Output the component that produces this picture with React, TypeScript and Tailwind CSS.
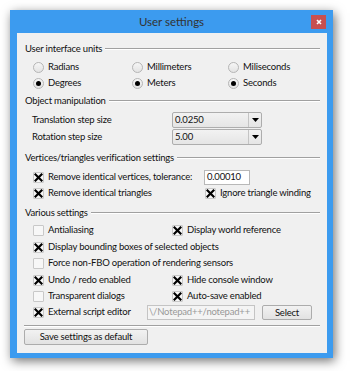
import React from "react";

const font = { fontFamily: 'Lato, "Noto Sans", sans-serif' };

function Radio({ checked, label }: { checked?: boolean; label: string }) {
  return (
    <div className="flex h-4 items-center">
      <span className="flex h-[11px] w-[11px] items-center justify-center rounded-full border border-[#b5b5b5] bg-gradient-to-b from-[#f6f6f6] to-[#e3e3e3]">
        {checked ? <span className="h-[5px] w-[5px] rounded-full bg-black" /> : null}
      </span>
      <span className="ml-[4px]">{label}</span>
    </div>
  );
}

function Check({ checked, label }: { checked?: boolean; label: string }) {
  return (
    <div className="flex h-4 items-center whitespace-nowrap">
      <span className="flex h-[11px] w-[11px] items-center justify-center rounded-[1px] border border-[#c8c8c8] bg-[#f7f7f7]">
        {checked ? (
          <svg width="9" height="9" viewBox="0 0 9 9">
            <path d="M1.5 1.5 L7.5 7.5 M7.5 1.5 L1.5 7.5" stroke="#000" strokeWidth="2.2" strokeLinecap="square" />
          </svg>
        ) : null}
      </span>
      <span className="ml-[4px]">{label}</span>
    </div>
  );
}

function Header({ label }: { label: string }) {
  return (
    <div className="flex h-[14px] items-center pl-2 pr-[7px]">
      <span className="whitespace-nowrap">{label}</span>
      <span className="ml-[3px] h-[2px] flex-1 border-t border-b border-t-[#a0a0a0] border-b-white" />
    </div>
  );
}

function Combo({ value }: { value: string }) {
  return (
    <div className="flex h-4 w-[90px] items-center rounded-[2px] border border-[#adadad] bg-gradient-to-b from-[#f2f2f2] to-[#e5e5e5]">
      <span className="flex-1 pl-[2px]">{value}</span>
      <span className="flex h-full w-[13px] items-center justify-center border-l border-[#c4c4c4]">
        <svg width="7" height="4" viewBox="0 0 7 4">
          <path d="M0 0 H7 L3.5 4 Z" fill="#000" />
        </svg>
      </span>
    </div>
  );
}

export default function App() {
  return (
    <div className="h-[371px] w-[350px] bg-white pl-[10px] pt-[10px]" style={font}>
      <div className="flex h-[348px] w-[323px] flex-col bg-[#3c9bef] shadow-[2px_3px_10px_rgba(0,0,0,0.55)]">
        <div className="relative flex h-[23px] items-center justify-center text-[11.5px] text-[#333]">
          User settings
          <span className="absolute right-[7px] top-[5px] flex h-[14px] w-[15px] items-center justify-center bg-[#c75050]">
            <svg width="6" height="6" viewBox="0 0 6 6">
              <path d="M1 1 L5 5 M5 1 L1 5" stroke="#fff" strokeWidth="1.6" />
            </svg>
          </span>
        </div>
        <div className="ml-[7px] mr-[6px] h-[320px] bg-[#f0f0f0] text-[9.5px] tracking-[-0.2px] text-[#111]">
          <div className="pt-[9px]">
            <Header label="User interface units" />
          </div>
          <div className="mt-[3px] grid grid-cols-[99px_96px_1fr] pl-4">
            <Radio label="Radians" />
            <Radio label="Millimeters" />
            <Radio label="Miliseconds" />
            <Radio checked label="Degrees" />
            <Radio checked label="Meters" />
            <Radio checked label="Seconds" />
          </div>
          <div className="mt-[3px]">
            <Header label="Object manipulation" />
          </div>
          <div className="mt-[4px] flex items-center pl-[15px]">
            <span className="w-[140px]">Translation step size</span>
            <Combo value="0.0250" />
          </div>
          <div className="mt-[1px] flex items-center pl-[15px]">
            <span className="w-[140px]">Rotation step size</span>
            <Combo value="5.00" />
          </div>
          <div className="mt-[6px]">
            <Header label="Vertices/triangles verification settings" />
          </div>
          <div className="mt-[4px] flex items-center pl-4">
            <div className="w-[171px]">
              <Check checked label="Remove identical vertices, tolerance:" />
            </div>
            <div className="flex h-[15px] w-[46px] items-center border border-[#b8b8b8] bg-white pl-[2px]">0.00010</div>
          </div>
          <div className="flex items-center pl-4">
            <div className="w-[172px]">
              <Check checked label="Remove identical triangles" />
            </div>
            <Check checked label="Ignore triangle winding" />
          </div>
          <div className="mt-[5px]">
            <Header label="Various settings" />
          </div>
          <div className="mt-[2px] flex flex-col pl-4">
            <div className="flex">
              <div className="w-[139px]">
                <Check label="Antialiasing" />
              </div>
              <Check checked label="Display world reference" />
            </div>
            <div className="mt-[1px]">
              <Check checked label="Display bounding boxes of selected objects" />
            </div>
            <Check label="Force non-FBO operation of rendering sensors" />
            <div className="mt-[1px] flex">
              <div className="w-[139px]">
                <Check checked label="Undo / redo enabled" />
              </div>
              <Check checked label="Hide console window" />
            </div>
            <div className="flex">
              <div className="w-[139px]">
                <Check label="Transparent dialogs" />
              </div>
              <Check checked label="Auto-save enabled" />
            </div>
            <div className="flex items-center">
              <div className="w-[114px]">
                <Check checked label="External script editor" />
              </div>
              <div className="flex h-[15px] w-[108px] items-center overflow-hidden whitespace-nowrap border border-[#c4c4c4] bg-[#f4f4f4] pl-[1px] text-[#999]">
                \/Notepad++/notepad++
              </div>
              <button className="ml-[7px] h-[15px] w-[50px] rounded-[2px] border border-[#acacac] bg-gradient-to-b from-[#f2f2f2] to-[#e2e2e2] text-[9.5px]">
                Select
              </button>
            </div>
          </div>
          <div className="mx-[7px] mt-[5px] h-[2px] border-t border-b border-t-[#a0a0a0] border-b-white" />
          <div className="mt-[2px] pl-[7px]">
            <button className="h-4 w-[124px] rounded-[2px] border border-[#acacac] bg-gradient-to-b from-[#f2f2f2] to-[#e2e2e2] text-[9.5px]">
              Save settings as default
            </button>
          </div>
        </div>
      </div>
    </div>
  );
}
